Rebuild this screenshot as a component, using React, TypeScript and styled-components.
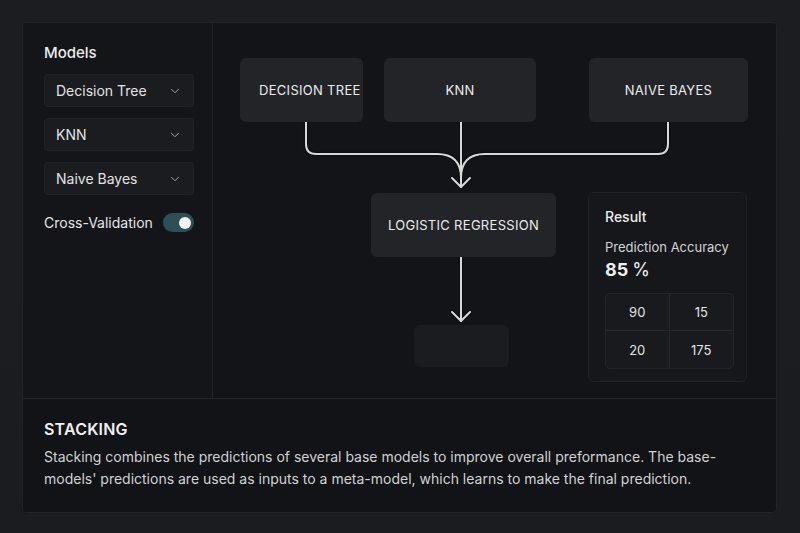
import React from "react";
import styled, { createGlobalStyle } from "styled-components";
import { ChevronDown } from "lucide-react";

const models = ["Decision Tree", "KNN", "Naive Bayes"];

interface NodeSpec {
  label: string;
  x: number;
  y: number;
  w: number;
  h: number;
  muted?: boolean;
  start?: boolean;
}

// diagram coordinates are local to the canvas (page offset 213, 22)
const nodes: NodeSpec[] = [
  { label: "DECISION TREE", x: 27, y: 35, w: 123, h: 64, start: true },
  { label: "KNN", x: 171, y: 35, w: 152, h: 64 },
  { label: "NAIVE BAYES", x: 376, y: 35, w: 159, h: 64 },
  { label: "LOGISTIC REGRESSION", x: 158, y: 170, w: 185, h: 64 },
  { label: "", x: 201, y: 302, w: 95, h: 42, muted: true },
];

const matrix = [
  [90, 15],
  [20, 175],
];

export default function App() {
  return (
    <>
      <GlobalStyle />
      <Page>
        <Card>
          <Top>
            <Sidebar>
              <SideTitle>Models</SideTitle>
              {models.map((m) => (
                <Select key={m}>
                  <span>{m}</span>
                  <ChevronDown size={14} strokeWidth={1.6} />
                </Select>
              ))}
              <ToggleRow>
                <span>Cross-Validation</span>
                <Toggle $on>
                  <Knob />
                </Toggle>
              </ToggleRow>
            </Sidebar>

            <Main>
              <Canvas>
                <Wires width="564" height="376" viewBox="0 0 564 376">
                  <g
                    fill="none"
                    stroke="#d9d9d9"
                    strokeWidth="2"
                    strokeLinecap="round"
                    strokeLinejoin="round"
                  >
                    <path d="M93 99 V121 Q93 131 103 131 H224 Q248 131 248 155" />
                    <path d="M455 99 V121 Q455 131 445 131 H272 Q248 131 248 155" />
                    <path d="M248 99 V164" />
                    <path d="M239 155 L248 164 L257 155" />
                    <path d="M248 234 V298" />
                    <path d="M239 289 L248 298 L257 289" />
                  </g>
                </Wires>
                {nodes.map((n, i) => (
                  <Node
                    key={i}
                    $muted={n.muted}
                    $start={n.start}
                    style={{ left: n.x, top: n.y, width: n.w, height: n.h }}
                  >
                    {n.label}
                  </Node>
                ))}
              </Canvas>

              <ResultCard>
                <ResultTitle>Result</ResultTitle>
                <AccLabel>Prediction Accuracy</AccLabel>
                <AccValue>
                  85<Pct>%</Pct>
                </AccValue>
                <Matrix>
                  {matrix.flat().map((v, i) => (
                    <Cell key={i}>{v}</Cell>
                  ))}
                </Matrix>
              </ResultCard>
            </Main>
          </Top>

          <Bottom>
            <Heading>STACKING</Heading>
            <Desc>
              Stacking combines the predictions of several base models to
              improve overall preformance. The base-models' predictions are
              used as inputs to a meta-model, which learns to make the final
              prediction.
            </Desc>
          </Bottom>
        </Card>
      </Page>
    </>
  );
}

const GlobalStyle = createGlobalStyle`
  html, body {
    margin: 0;
    padding: 0;
    background: #1a1c20;
    font-family: Inter, "Noto Sans", sans-serif;
    color: #e6e6e6;
  }
`;

const Page = styled.div`
  width: 800px;
  height: 533px;
  padding: 22px 23px 22px 22px;
  box-sizing: border-box;
  background: linear-gradient(180deg, #1b1d21 0%, #1a1c20 100%);
`;

const Card = styled.div`
  height: 489px;
  background: #121418;
  border: 1px solid #202328;
  border-radius: 5px;
  display: flex;
  flex-direction: column;
  overflow: hidden;
`;

const Top = styled.div`
  display: flex;
  height: 375px;
  border-bottom: 1px solid #22252a;
`;

const Sidebar = styled.div`
  width: 190px;
  flex-shrink: 0;
  border-right: 1px solid #22252a;
  padding: 20px 18px 0 21px;
  box-sizing: border-box;
  display: flex;
  flex-direction: column;
  gap: 11px;
  background: #131519;
`;

const SideTitle = styled.div`
  font-size: 15px;
  font-weight: 500;
  color: #ececec;
  margin-bottom: 1px;
`;

const Select = styled.div`
  height: 33px;
  box-sizing: border-box;
  display: flex;
  align-items: center;
  justify-content: space-between;
  padding: 0 11px;
  background: #1a1c20;
  border: 1px solid #202328;
  border-radius: 4px;
  font-size: 14px;
  color: #e2e2e2;

  svg {
    color: #a9acb2;
  }
`;

const ToggleRow = styled.div`
  display: flex;
  align-items: center;
  justify-content: space-between;
  font-size: 14px;
  color: #e6e6e6;
  margin-top: 7px;
`;

const Toggle = styled.div<{ $on?: boolean }>`
  width: 31px;
  height: 19px;
  border-radius: 10px;
  background: ${({ $on }) => ($on ? "#2e4f56" : "#2a2d32")};
  display: flex;
  align-items: center;
  justify-content: ${({ $on }) => ($on ? "flex-end" : "flex-start")};
  padding: 0 3px;
  box-sizing: border-box;
`;

const Knob = styled.div`
  width: 12px;
  height: 12px;
  border-radius: 50%;
  background: #f2f2f2;
`;

const Main = styled.div`
  flex: 1;
  position: relative;
  display: flex;
  justify-content: flex-end;
  align-items: flex-end;
  padding: 0 29px 16px 0;
  background: #121418;
`;

const Canvas = styled.div`
  position: absolute;
  inset: 0;
`;

const Wires = styled.svg`
  position: absolute;
  left: 0;
  top: 0;
  filter: drop-shadow(0 0 1px #000);
`;

const Node = styled.div<{ $muted?: boolean; $start?: boolean }>`
  position: absolute;
  box-sizing: border-box;
  display: flex;
  align-items: center;
  justify-content: ${({ $start }) => ($start ? "flex-start" : "center")};
  padding-left: ${({ $start }) => ($start ? "19px" : "0")};
  white-space: nowrap;
  background: ${({ $muted }) => ($muted ? "#1a1c20" : "#222428")};
  border-radius: 6px;
  font-size: 13px;
  font-weight: 400;
  letter-spacing: 0.3px;
  color: #ececec;
`;

const ResultCard = styled.div`
  position: relative;
  width: 159px;
  height: 190px;
  box-sizing: border-box;
  background: #15171b;
  border: 1px solid #1f2226;
  border-radius: 6px;
  padding: 15px 15px 0 16px;
  display: flex;
  flex-direction: column;
`;

const ResultTitle = styled.div`
  font-size: 14px;
  font-weight: 500;
  color: #ececec;
`;

const AccLabel = styled.div`
  font-size: 13px;
  color: #d4d4d4;
  margin-top: 14px;
`;

const AccValue = styled.div`
  font-size: 18px;
  font-weight: 700;
  color: #f0f0f0;
  margin-top: 4px;
`;

const Pct = styled.span`
  font-weight: 400;
  margin-left: 4px;
`;

const Matrix = styled.div`
  margin-top: 13px;
  width: 127px;
  display: grid;
  grid-template-columns: 1fr 1fr;
  grid-auto-rows: 37px;
  background: #181a1e;
  border: 1px solid #22252a;
  border-radius: 5px;
  overflow: hidden;
`;

const Cell = styled.div`
  display: flex;
  align-items: center;
  justify-content: center;
  font-size: 13px;
  color: #e4e4e4;
  border-color: #25282d;
  border-style: solid;
  border-width: 0;

  &:nth-child(odd) {
    border-right-width: 1px;
  }
  &:nth-child(-n + 2) {
    border-bottom-width: 1px;
  }
`;

const Bottom = styled.div`
  flex: 1;
  padding: 20px 30px 0 21px;
  background: #111317;
`;

const Heading = styled.div`
  font-size: 16px;
  font-weight: 600;
  color: #f0f0f0;
  letter-spacing: 0.2px;
`;

const Desc = styled.p`
  margin: 7px 0 0;
  font-size: 14px;
  line-height: 22px;
  color: #d2d2d2;
`;
